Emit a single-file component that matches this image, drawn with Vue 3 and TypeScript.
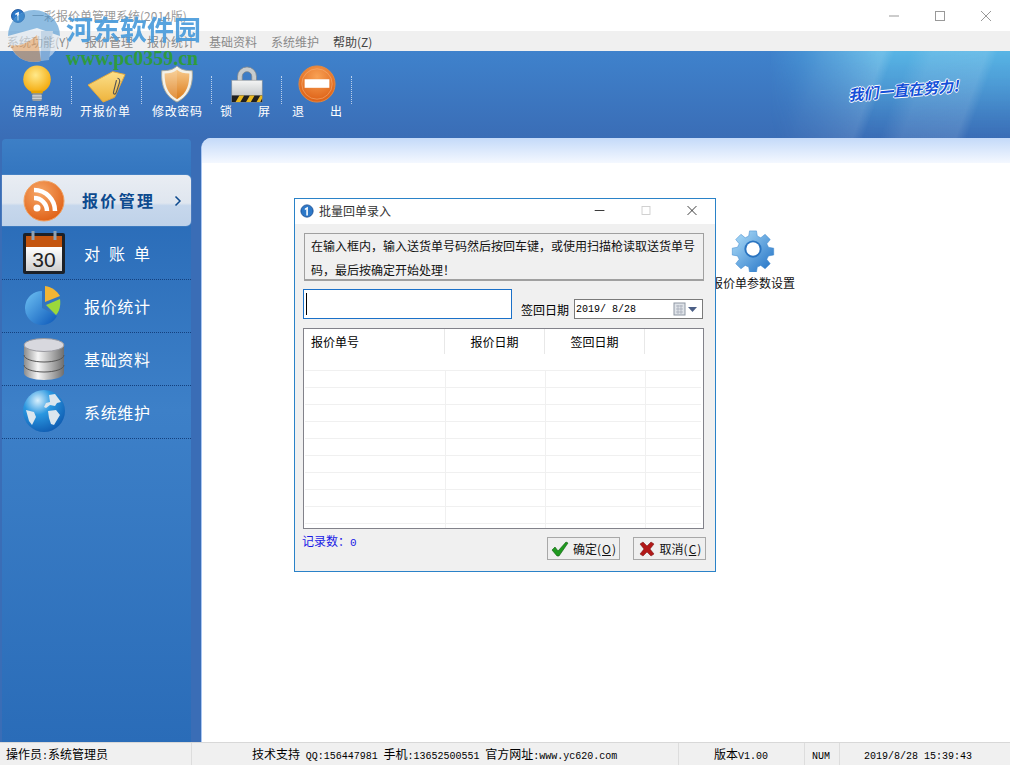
<script setup lang="ts">
const menus = [
  { label: "系统功能(Y)" },
  { label: "报价管理" },
  { label: "报价统计" },
  { label: "基础资料" },
  { label: "系统维护" },
  { label: "帮助(Z)", on: true },
];
const tools = [
  { id: "bulb", label: "使用帮助" },
  { id: "tag", label: "开报价单" },
  { id: "shield", label: "修改密码" },
  { id: "lock", label: "锁屏" },
  { id: "exit", label: "退出" },
];
const navs = [
  { id: "rss", label: "报价管理", active: true },
  { id: "cal", label: "对账单" },
  { id: "pie", label: "报价统计" },
  { id: "db", label: "基础资料" },
  { id: "globe", label: "系统维护" },
];
const rows = Array.from({ length: 10 }, (_, i) => i);
</script>

<template>
  <div class="win">
    <header class="titlebar">
      <svg class="appicon" viewBox="0 0 16 16"><circle cx="8" cy="8" r="7.4" fill="#2c78c8" stroke="#174d94" /><path d="M5 5l4-2v10H7V6L5 7z" fill="#fff" /></svg>
      <span class="apptitle">一彩报价单管理系统(2014版)</span>
      <div class="caption">
        <svg viewBox="0 0 46 30"><path d="M18 15h10" stroke="#999" /></svg>
        <svg viewBox="0 0 46 30"><rect x="18.500" y="10.500" width="9" height="9" fill="none" stroke="#999" /></svg>
        <svg viewBox="0 0 46 30"><path d="M18 10l10 10M28 10L18 20" stroke="#999" /></svg>
      </div>
    </header>

    <nav class="menubar">
      <span v-for="m in menus" :key="m.label" class="menu" :class="{ on: m.on }">{{ m.label }}</span>
    </nav>

    <section class="toolbar">
      <div class="rays" />
      <div v-for="t in tools" :key="t.id" class="tool">
        <svg class="toolicon" viewBox="0 0 40 40">
          <defs>
            <radialGradient id="bulbfill" cx="0.45" cy="0.35" r="0.7"><stop offset="0" stop-color="#ffe98a" /><stop offset="1" stop-color="#f3a400" /></radialGradient>
            <linearGradient id="tagfill" x1="0" y1="0" x2="0" y2="1"><stop offset="0" stop-color="#fce08a" /><stop offset="1" stop-color="#eeb33c" /></linearGradient>
            <linearGradient id="shieldfill" x1="0" y1="0" x2="0" y2="1"><stop offset="0" stop-color="#f7c98a" /><stop offset="1" stop-color="#dc7d1c" /></linearGradient>
            <linearGradient id="lockfill" x1="0" y1="0" x2="0" y2="1"><stop offset="0" stop-color="#f4f5f5" /><stop offset="1" stop-color="#b4b8ba" /></linearGradient>
            <radialGradient id="exitfill" cx="0.5" cy="0.3" r="0.8"><stop offset="0" stop-color="#f8a154" /><stop offset="1" stop-color="#d9560c" /></radialGradient>
          </defs>
          <g v-if="t.id === 'bulb'">
            <circle cx="20" cy="15" r="14.500" fill="url(#bulbfill)" />
            <path d="M14 27h12v3H14z" fill="#e8a400" />
            <rect x="15" y="30" width="10" height="8" rx="1.500" fill="#9a9ea0" />
            <path d="M15 32.500h10M15 35h10" stroke="#e4e6e6" />
          </g>
          <g v-else-if="t.id === 'tag'">
            <path d="M0 21L26 7L39 10L28 34L16 39Z" fill="url(#tagfill)" stroke="#e6a93a" stroke-linejoin="round" />
            <path d="M31 14c2 0 3 2 2 5l-3 9c-1 4-4 3-3 0l3-12" fill="none" stroke="#555" stroke-width="1.200" />
          </g>
          <g v-else-if="t.id === 'shield'">
            <path d="M20 1c4 4 9 5 16 5 1 13-2 26-16 33C6 32 3 19 4 6c7 0 12-1 16-5z" fill="#f3f1e8" stroke="#a8a69a" />
            <path d="M20 5c3 3 8 4 13 4 0 11-2 21-13 27C9 30 7 20 7 9c5 0 10-1 13-4z" fill="url(#shieldfill)" />
            <path d="M20 5v31C9 30 7 20 7 9c5 0 10-1 13-4z" fill="#fff" opacity=".14" />
          </g>
          <g v-else-if="t.id === 'lock'">
            <path d="M10 18v-6a10 10 0 0 1 20 0v6h-5v-6a5 5 0 0 0-10 0v6z" fill="#c8ccce" stroke="#80868a" stroke-width=".8" />
            <rect x="4" y="16" width="32" height="23" fill="url(#lockfill)" stroke="#8c9092" stroke-width=".6" />
            <rect x="4" y="32" width="32" height="7" fill="#1f1f1f" />
            <path d="M8 39l4-7h5l-4 7zM19 39l4-7h5l-4 7zM30 39l4-7h2v3l-2 4z" fill="#e8b820" />
          </g>
          <g v-else>
            <circle cx="20" cy="20" r="19" fill="url(#exitfill)" stroke="#e78a3e" />
            <circle cx="20" cy="20" r="16" fill="none" stroke="#f7b27a" opacity=".6" />
            <rect x="7" y="15" width="26" height="9" fill="#fff" />
          </g>
        </svg>
        <span class="spread toollabel"><i v-for="c in t.label" :key="c">{{ c }}</i></span>
      </div>
      <div class="slogan">我们一直在努力!</div>
    </section>

    <main class="main">
      <aside class="sidebar">
        <div class="panel">
          <div v-for="n in navs" :key="n.id" class="navrow" :class="{ active: n.active }">
            <svg class="navicon" viewBox="0 0 44 44">
              <defs>
                <radialGradient id="rssfill" cx="0.4" cy="0.3" r="0.8"><stop offset="0" stop-color="#f7a868" /><stop offset="1" stop-color="#dd5a0f" /></radialGradient>
                <linearGradient id="pagefill" x1="0" y1="0" x2="0" y2="1"><stop offset="0" stop-color="#fff" /><stop offset="1" stop-color="#cfcfcf" /></linearGradient>
                <linearGradient id="piefill" x1="0" y1="0" x2="1" y2="1"><stop offset="0" stop-color="#6fc2f4" /><stop offset="1" stop-color="#0a56b8" /></linearGradient>
                <linearGradient id="cylfill" x1="0" y1="0" x2="1" y2="0"><stop offset="0" stop-color="#8c8c8c" /><stop offset=".35" stop-color="#f6f6f6" /><stop offset="1" stop-color="#6e6e6e" /></linearGradient>
                <radialGradient id="globefill" cx="0.35" cy="0.25" r="0.85"><stop offset="0" stop-color="#d8f0fd" /><stop offset=".4" stop-color="#2a97e0" /><stop offset="1" stop-color="#0c55ac" /></radialGradient>
              </defs>
              <g v-if="n.id === 'rss'">
                <circle cx="22" cy="22" r="20" fill="url(#rssfill)" stroke="#f0a060" />
                <circle cx="15" cy="29" r="3.500" fill="#fff" />
                <path d="M12 19a13 13 0 0 1 13 13M12 11a21 21 0 0 1 21 21" fill="none" stroke="#fff" stroke-width="4.500" />
              </g>
              <g v-else-if="n.id === 'cal'">
                <rect x="1" y="2" width="42" height="41" rx="2" fill="#1c2128" />
                <rect x="4" y="5" width="36" height="11" fill="#c4550f" />
                <rect x="4" y="16" width="36" height="24" fill="url(#pagefill)" />
                <path d="M11 0v9M33 0v9" stroke="#8ea2b4" stroke-width="3" />
                <text x="22" y="36" text-anchor="middle" class="calnum">30</text>
              </g>
              <g v-else-if="n.id === 'pie'">
                <path d="M20 7A17 17 0 1 0 35 32L20 24Z" fill="url(#piefill)" />
                <path d="M23 2C30 3 35 7 38 12L23 18Z" fill="#f2b534" />
                <path d="M38 15C39 22 37 28 34 31L24 21Z" fill="#9bd83a" />
              </g>
              <g v-else-if="n.id === 'db'">
                <path d="M2 8v28c0 4 9 7 20 7s20-3 20-7V8z" fill="url(#cylfill)" />
                <ellipse cx="22" cy="8" rx="20" ry="6.500" fill="#d8d8de" stroke="#9a9aa0" />
                <path d="M2 18c0 4 9 7 20 7s20-3 20-7M2 28c0 4 9 7 20 7s20-3 20-7" fill="none" stroke="#555" />
              </g>
              <g v-else>
                <circle cx="22" cy="21" r="21" fill="url(#globefill)" />
                <path d="M27 5l6-1 6 8-4 1-2 3-5-1-4 3-2-1 2-4 4-1zM26 21l8-1 4 5-6 10-3-1-2-6zM4 20l8 2 2 5-4 8-3-4z" fill="#dbe6ee" />
              </g>
            </svg>
            <span class="spread navlabel"><i v-for="c in n.label" :key="c">{{ c }}</i></span>
            <svg v-if="n.active" class="chevron" viewBox="0 0 8 12"><path d="M1.500 1.500L6 6l-4.500 4.500" fill="none" stroke="#0d4a8e" stroke-width="1.500" /></svg>
          </div>
        </div>
      </aside>
      <div class="content">
        <div class="contenthead" />
      </div>
    </main>

    <footer class="statusbar">
      <span class="cell c1">操作员<b>:</b>系统管理员</span>
      <span class="cell c2">技术支持 <b>QQ:156447981</b> 手机<b>:13652500551</b> 官方网址<b>:www.yc620.com</b></span>
      <span class="cell c3">版本<b>V1.00</b></span>
      <span class="cell c4"><b>NUM</b></span>
      <span class="cell c5"><b>2019/8/28 15:39:43</b></span>
    </footer>

    <div class="shortcut">
      <svg class="gear" viewBox="0 0 48 48">
        <defs><linearGradient id="gearfill" x1="0" y1="0" x2="1" y2="1"><stop offset="0" stop-color="#b4e2fb" /><stop offset="1" stop-color="#1c6ec4" /></linearGradient></defs>
        <path d="M20 3h8l1 6 4 2 5-4 6 6-4 5 2 4 6 1v8l-6 1-2 4 4 5-6 6-5-4-4 2-1 6h-8l-1-6-4-2-5 4-6-6 4-5-2-4-6-1v-8l6-1 2-4-4-5 6-6 5 4 4-2z" transform="translate(2.400 2.400) scale(.9)" fill="url(#gearfill)" stroke="#3c86cc" stroke-width=".6" />
        <circle cx="24" cy="24" r="9" fill="#2a74c0" />
        <circle cx="24" cy="24" r="7" fill="#fff" />
      </svg>
      <span>报价单参数设置</span>
    </div>

    <div class="watermark">
      <svg class="wmlogo" viewBox="0 0 54 54">
        <circle cx="27" cy="27" r="26" fill="#dfe9f2" />
        <path d="M1 27A26 26 0 0 1 53 27L30 19z" fill="#4a94d0" />
        <path d="M3 36c9 2 18-2 27-10l4 26c-15 4-26-4-31-16z" fill="#e5a365" />
        <path d="M34 22h12l-4 29-8 1z" fill="#a8c6e0" />
      </svg>
      <div class="wmtext">河东软件园</div>
      <div class="wmurl">www.pc0359.cn</div>
    </div>

    <div class="dialog">
      <div class="dlgtitle">
        <svg class="dlgicon" viewBox="0 0 16 16"><circle cx="8" cy="8" r="7" fill="#2c78c8" stroke="#174d94" /><path d="M5.500 5l3.500-2v10H7.200V6L5.500 7z" fill="#fff" /></svg>
        <span>批量回单录入</span>
        <div class="dlgcaption">
          <svg viewBox="0 0 46 26"><path d="M17 13h11" stroke="#222" /></svg>
          <svg viewBox="0 0 46 26"><rect x="18.500" y="8.500" width="9" height="9" fill="none" stroke="#ccc" /></svg>
          <svg viewBox="0 0 46 26"><path d="M18 8l10 10M28 8L18 18" stroke="#222" /></svg>
        </div>
      </div>
      <div class="dlgbody">
        <div class="notice">在输入框内，输入送货单号码然后按回车键，或使用扫描枪读取送货单号码，最后按确定开始处理！</div>
        <div class="formrow">
          <div class="scaninput"><i class="caret" /></div>
          <label class="datelabel">签回日期</label>
          <div class="datebox">
            <span>2019/ 8/28</span>
            <svg class="calicon" viewBox="0 0 26 14">
              <rect x="1" y="1" width="11" height="12" fill="#dfe3e8" stroke="#8f98a4" />
              <path d="M3 4h7M3 7h7M3 10h7M5 3v9M8 3v9" stroke="#a0a8b4" stroke-width=".7" />
              <path d="M15 5h9l-4.500 5z" fill="#4c5f86" />
            </svg>
          </div>
        </div>
        <div class="grid">
          <div class="gridhead">
            <span class="h1">报价单号</span><span class="h2">报价日期</span><span class="h3">签回日期</span><span class="h4" />
          </div>
          <div v-for="r in rows" :key="r" class="gridrow"><i /><i /><i /><i /></div>
        </div>
        <div class="dlgfoot">
          <span class="count">记录数：<b>0</b></span>
          <button class="btn">
            <svg viewBox="0 0 18 16"><path d="M1 9l3-3 3 4 8-9 2 1-9 13H6z" fill="#1f9a1f" stroke="#0d5a0d" stroke-width=".6" /></svg>
            确定(<u>O</u>)
          </button>
          <button class="btn cancel">
            <svg viewBox="0 0 16 16"><path d="M1 3l3-2 4 4 4-4 3 2-4 5 4 5-3 2-4-4-4 4-3-2 4-5z" fill="#b21818" stroke="#6e0e0e" stroke-width=".5" /></svg>
            取消(<u>C</u>)
          </button>
        </div>
      </div>
    </div>
  </div>
</template>

<style scoped>
.win {
  position: relative;
  display: flex;
  flex-direction: column;
  width: 1010px;
  height: 765px;
  overflow: hidden;
  background: #fff;
  font-family: "Noto Sans CJK SC", "Liberation Sans", sans-serif;
  font-size: 12px;
  color: #000;
}

.titlebar {
  display: flex;
  align-items: center;
  flex: none;
  height: 31px;
  padding-left: 11px;
  background: #fff;
}
.appicon {
  width: 14px;
  height: 14px;
}
.apptitle {
  margin-left: 7px;
  margin-top: -1px;
  color: #9a9a9a;
  font-size: 12px;
}
.caption {
  display: flex;
  margin-left: auto;
  margin-right: 1px;
}
.caption svg {
  width: 46px;
  height: 30px;
}

.menubar {
  display: flex;
  align-items: center;
  flex: none;
  gap: 14px;
  height: 20px;
  padding-left: 7px;
  background: #f0f0f0;
  color: #8a8a8a;
}
.menu.on {
  color: #444;
}
.menu:first-child {
  width: 64px;
}

.toolbar {
  position: relative;
  display: flex;
  flex: none;
  height: 87px;
  padding-left: 2px;
  overflow: hidden;
  background: linear-gradient(#3f82cc, #3a6db6);
}
.rays {
  position: absolute;
  top: 0;
  right: 0;
  width: 240px;
  height: 100%;
  background:
    linear-gradient(110deg, transparent 12%, rgba(255, 255, 255, 0.1) 20%, rgba(255, 255, 255, 0.14) 42%, transparent 46%, transparent 52%, rgba(255, 255, 255, 0.1) 60%, rgba(255, 255, 255, 0.12) 80%, transparent 84%),
    linear-gradient(rgba(105, 215, 245, 0.6), rgba(105, 215, 245, 0.12) 75%, transparent);
  -webkit-mask-image: linear-gradient(90deg, transparent, #000 45%, #000 100%);
  mask-image: linear-gradient(90deg, transparent, #000 45%, #000 100%);
}
.tool {
  position: relative;
  display: flex;
  flex-direction: column;
  align-items: center;
  width: 70px;
  padding-top: 14px;
}
.tool::after {
  content: "";
  position: absolute;
  top: 25px;
  right: 0;
  height: 28px;
  border-right: 1px dotted rgba(255, 255, 255, 0.65);
}
.toolicon {
  width: 38px;
  height: 38px;
}
.spread {
  display: flex;
  justify-content: space-between;
}
.spread i {
  font-style: normal;
}
.toollabel {
  width: 50px;
  color: #fff;
  line-height: 16px;
}
.tool:nth-child(3) .toollabel,
.tool:nth-child(5) .toollabel {
  margin-right: 4px;
}
.slogan {
  position: absolute;
  top: 28px;
  right: 51px;
  color: #1450d8;
  font-size: 15px;
  font-style: italic;
  font-weight: 700;
  transform: rotate(-5deg);
  text-shadow: 1px 0 #fff, -1px 0 #fff, 0 1px #fff, 0 -1px #fff;
}

.main {
  display: flex;
  flex: 1;
  min-height: 0;
  background: #3a6db6;
}
.sidebar {
  flex: none;
  width: 201px;
  padding: 1px 10px 0 2px;
  box-sizing: border-box;
}
.panel {
  height: 100%;
  padding-top: 36px;
  box-sizing: border-box;
  border-radius: 4px 4px 0 0;
  background: linear-gradient(#3d7fc6, #2a6cb8 12%, #3d80c8 45%, #2a6cb8 100%);
}
.navrow {
  display: flex;
  align-items: center;
  height: 53px;
  padding-left: 20px;
  box-sizing: border-box;
  border-bottom: 1px dotted #14407e;
  color: #fff;
}
.navrow.active {
  height: 51px;
  margin-bottom: 1px;
  border: none;
  border-radius: 0 5px 5px 0;
  background: linear-gradient(#e9edf3, #dfe6ef 55%, #c6d7ec 60%, #bfd2e9);
  box-shadow: 0 0 1px #e8eef5;
}
.navicon {
  flex: none;
  width: 44px;
  height: 44px;
}
.navlabel {
  width: 66px;
  margin-left: 18px;
  font-size: 16px;
  line-height: 22px;
}
.active .navlabel {
  width: 71px;
  margin-left: 16px;
  margin-bottom: 2px;
  color: #0d4a8e;
  font-weight: 700;
}
.chevron {
  width: 8px;
  height: 12px;
  margin-left: 21px;
}
.calnum {
  font-family: "Liberation Sans", sans-serif;
  font-size: 21px;
  fill: #222;
}

.content {
  flex: 1;
  border-left: 1px solid #a9c6f2;
  border-radius: 10px 0 0 0;
  background: #fff;
  overflow: hidden;
}
.contenthead {
  height: 25px;
  background: linear-gradient(#c4daf9, #f4f8ff);
}

.statusbar {
  display: flex;
  flex: none;
  align-items: center;
  height: 23px;
  border-top: 1px solid #d8d8d8;
  box-sizing: border-box;
  background: #f0f0f0;
}
.statusbar b {
  font-family: "Liberation Mono", monospace;
  font-size: 10px;
  font-weight: 400;
}
.cell {
  box-sizing: border-box;
  height: 100%;
  border-right: 1px solid #ddd;
  line-height: 21px;
  white-space: nowrap;
}
.c1 {
  width: 192px;
  padding-left: 6px;
}
.c2 {
  width: 487px;
  padding-left: 60px;
  word-spacing: 3px;
}
.c3 {
  width: 126px;
  padding-left: 35px;
}
.c4 {
  width: 35px;
  padding-left: 7px;
}
.c5 {
  flex: 1;
  padding-left: 24px;
  border: none;
}

.shortcut {
  position: absolute;
  top: 226px;
  left: 711px;
  display: flex;
  flex-direction: column;
  align-items: center;
  color: #111;
  line-height: 16px;
}
.gear {
  width: 48px;
  height: 46px;
  margin-bottom: 3px;
}

.watermark {
  position: absolute;
  top: 4px;
  left: 6px;
  width: 200px;
  height: 66px;
  pointer-events: none;
}
.wmlogo {
  position: absolute;
  top: 5px;
  left: 1px;
  width: 54px;
  height: 54px;
  opacity: 0.62;
}
.wmtext {
  position: absolute;
  top: 7px;
  left: 60px;
  color: #4a9cdc;
  font-size: 27px;
  font-weight: 700;
  line-height: 36px;
  white-space: nowrap;
  opacity: 0.92;
}
.wmurl {
  position: absolute;
  top: 44px;
  left: 60px;
  color: #2e9b3e;
  font-family: "Liberation Serif", serif;
  font-size: 20px;
  font-weight: 700;
  line-height: 20px;
  white-space: nowrap;
}

.dialog {
  position: absolute;
  top: 198px;
  left: 294px;
  width: 422px;
  height: 374px;
  display: flex;
  flex-direction: column;
  box-sizing: border-box;
  border: 1px solid #2a82c8;
  background: #f0f0f0;
}
.dlgtitle {
  display: flex;
  align-items: center;
  flex: none;
  box-sizing: border-box;
  height: 25px;
  padding: 0 0 2px 5px;
  background: #fff;
  color: #333;
}
.dlgicon {
  width: 14px;
  height: 14px;
  margin-right: 5px;
}
.dlgcaption {
  display: flex;
  margin-left: auto;
}
.dlgcaption svg {
  width: 46px;
  height: 23px;
}
.dlgbody {
  flex: 1;
  display: flex;
  flex-direction: column;
  padding: 9px 12px 0 8px;
}
.notice {
  box-sizing: border-box;
  width: 400px;
  height: 48px;
  margin-left: 1px;
  padding: 0 6px;
  border: 1px solid #a0a0a0;
  border-width: 1px 1px 2px 1px;
  color: #111;
  line-height: 24px;
}
.formrow {
  display: flex;
  align-items: flex-end;
  margin-top: 8px;
}
.scaninput {
  box-sizing: border-box;
  width: 209px;
  height: 30px;
  padding: 3px 2px;
  border: 1px solid #1a70c8;
  background: #fff;
}
.caret {
  display: block;
  width: 1px;
  height: 22px;
  background: #000;
}
.datelabel {
  margin-left: 9px;
  line-height: 18px;
}
.datebox {
  display: flex;
  align-items: center;
  justify-content: space-between;
  box-sizing: border-box;
  width: 129px;
  height: 20px;
  margin-left: 5px;
  padding: 0 3px 0 1px;
  border: 1px solid #7a7a7a;
  background: #fff;
  font-family: "Liberation Mono", monospace;
  font-size: 10px;
}
.datebox span {
  white-space: pre;
}
.calicon {
  width: 26px;
  height: 14px;
}
.grid {
  box-sizing: border-box;
  width: 401px;
  height: 201px;
  margin-top: 9px;
  padding: 0 2px 0 1px;
  overflow: hidden;
  border: 1px solid #82828a;
  background: #fff;
}
.gridhead {
  display: flex;
  height: 41px;
  border-bottom: 1px solid #f0f0f0;
  line-height: 25px;
}
.gridhead span {
  box-sizing: border-box;
  width: 100px;
  height: 25px;
  text-align: center;
  border-right: 1px solid #e8e8e8;
}
.gridhead .h1 {
  width: 140px;
  padding-left: 6px;
  text-align: left;
}
.gridhead .h4 {
  flex: 1;
  border: none;
}
.gridrow {
  display: flex;
  box-sizing: border-box;
  height: 17px;
  border-bottom: 1px solid #f0f0f0;
}
.gridrow i {
  box-sizing: border-box;
  width: 100px;
  border-right: 1px solid #f0f0f0;
}
.gridrow i:first-child {
  width: 141px;
}
.gridrow i:last-child {
  flex: 1;
  border: none;
}
.dlgfoot {
  position: relative;
  display: flex;
  height: 30px;
  margin-top: 3px;
}
.count {
  margin-left: -1px;
  color: #1a1ae6;
  line-height: 17px;
}
.count b {
  font-family: "Liberation Mono", monospace;
  font-size: 11px;
  font-weight: 400;
}
.btn {
  position: absolute;
  top: 5px;
  right: 83px;
  display: flex;
  align-items: center;
  justify-content: center;
  gap: 4px;
  box-sizing: border-box;
  width: 73px;
  height: 23px;
  padding: 0;
  border: 1px solid #a8a8a8;
  background: #efefef;
  font: inherit;
  color: #111;
}
.btn.cancel {
  right: -3px;
}
.btn svg {
  width: 18px;
  height: 16px;
}
.btn u {
  margin: 0 -3px;
}
</style>
